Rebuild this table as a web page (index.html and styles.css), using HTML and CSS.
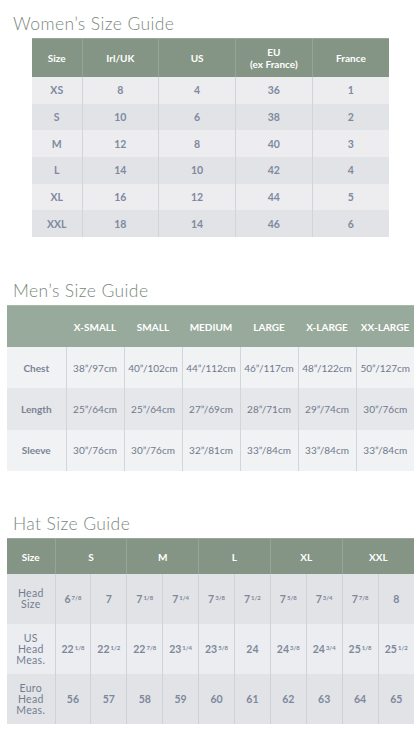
FILE: index.html
```html
<!DOCTYPE html>
<html lang="en">
<head>
<meta charset="utf-8">
<title>Size Guides</title>
<link rel="stylesheet" href="styles.css">
</head>
<body>
<main class="page">
  <section class="guide guide-women">
    <h2 class="guide-title">Women’s Size Guide</h2>
    <table class="chart women">
      <colgroup><col class="c-first"><col><col><col><col></colgroup>
      <thead>
        <tr><th>Size</th><th>Irl/UK</th><th>US</th><th>EU<br>(ex France)</th><th>France</th></tr>
      </thead>
      <tbody>
        <tr><td>XS</td><td>8</td><td>4</td><td>36</td><td>1</td></tr>
        <tr><td>S</td><td>10</td><td>6</td><td>38</td><td>2</td></tr>
        <tr><td>M</td><td>12</td><td>8</td><td>40</td><td>3</td></tr>
        <tr><td>L</td><td>14</td><td>10</td><td>42</td><td>4</td></tr>
        <tr><td>XL</td><td>16</td><td>12</td><td>44</td><td>5</td></tr>
        <tr><td>XXL</td><td>18</td><td>14</td><td>46</td><td>6</td></tr>
      </tbody>
    </table>
  </section>

  <section class="guide guide-men">
    <h2 class="guide-title">Men’s Size Guide</h2>
    <table class="chart men">
      <colgroup><col class="c-first"><col><col><col><col><col><col></colgroup>
      <thead>
        <tr><th></th><th>X-SMALL</th><th>SMALL</th><th>MEDIUM</th><th>LARGE</th><th>X-LARGE</th><th>XX-LARGE</th></tr>
      </thead>
      <tbody>
        <tr><th class="row-label">Chest</th><td>38”/97cm</td><td>40”/102cm</td><td>44”/112cm</td><td>46”/117cm</td><td>48”/122cm</td><td>50”/127cm</td></tr>
        <tr><th class="row-label">Length</th><td>25”/64cm</td><td>25”/64cm</td><td>27”/69cm</td><td>28”/71cm</td><td>29”/74cm</td><td>30”/76cm</td></tr>
        <tr><th class="row-label">Sleeve</th><td>30”/76cm</td><td>30”/76cm</td><td>32”/81cm</td><td>33”/84cm</td><td>33”/84cm</td><td>33”/84cm</td></tr>
      </tbody>
    </table>
  </section>

  <section class="guide guide-hat">
    <h2 class="guide-title">Hat Size Guide</h2>
    <table class="chart hat">
      <colgroup><col class="c-first"><col><col><col><col><col><col><col><col><col><col></colgroup>
      <thead>
        <tr><th>Size</th><th colspan="2">S</th><th colspan="2">M</th><th colspan="2">L</th><th colspan="2">XL</th><th colspan="2">XXL</th></tr>
      </thead>
      <tbody>
        <tr><th class="row-label">Head<br>Size</th><td>6<sup>7/8</sup></td><td>7</td><td>7<sup>1/8</sup></td><td>7<sup>1/4</sup></td><td>7<sup>3/8</sup></td><td>7<sup>1/2</sup></td><td>7<sup>5/8</sup></td><td>7<sup>3/4</sup></td><td>7<sup>7/8</sup></td><td>8</td></tr>
        <tr><th class="row-label">US<br>Head<br>Meas.</th><td>22<sup>1/8</sup></td><td>22<sup>1/2</sup></td><td>22<sup>7/8</sup></td><td>23<sup>1/4</sup></td><td>23<sup>5/8</sup></td><td>24</td><td>24<sup>3/8</sup></td><td>24<sup>3/4</sup></td><td>25<sup>1/8</sup></td><td>25<sup>1/2</sup></td></tr>
        <tr><th class="row-label">Euro<br>Head<br>Meas.</th><td>56</td><td>57</td><td>58</td><td>59</td><td>60</td><td>61</td><td>62</td><td>63</td><td>64</td><td>65</td></tr>
      </tbody>
    </table>
  </section>
</main>
</body>
</html>
```

FILE: styles.css
```css
html, body {
  margin: 0;
  padding: 0;
  background: #ffffff;
}

body {
  font-family: Lato, "Open Sans", "DejaVu Sans", sans-serif;
  color: #7a8396;
}

.page {
  width: 420px;
  display: flex;
  flex-direction: column;
}

.guide {
  display: flex;
  flex-direction: column;
}

.guide-title {
  margin: 0 0 4px;
  padding-left: 13px;
  font-family: Lato, "Open Sans", sans-serif;
  font-weight: 300;
  font-size: 17.5px;
  line-height: 20px;
  letter-spacing: 0.4px;
  color: #7b887e;
}

.guide-women { padding-top: 14px; }
.guide-men { padding-top: 44px; }
.guide-hat { padding-top: 43px; }

.chart {
  border-collapse: collapse;
  table-layout: fixed;
  text-align: center;
}

.chart th,
.chart td {
  padding: 0;
  vertical-align: middle;
  text-align: center;
}

.chart thead th {
  color: #ffffff;
  font-weight: 700;
  font-size: 10px;
  line-height: 12px;
}

.chart tbody td,
.chart tbody th {
  font-size: 10px;
  line-height: 12px;
}

/* Women's */
.women {
  width: 357px;
  margin: 0 31px 0 32px;
}
.women col.c-first { width: 50px; }
.women thead th {
  background: #849585;
  height: 38px;
  border-left: 1px solid #96a597;
  border-top: 1px solid #9aa89b;
}
.women thead th:first-child { border-left: none; }
.women tbody td {
  height: 26.7px;
  font-weight: 700;
  font-size: 10.5px;
  color: #8089a0;
  border-left: 1px solid #d1d4da;
}
.women tbody td:first-child { border-left: none; }
.women tbody tr:nth-child(odd) td { background: #ededf0; }
.women tbody tr:nth-child(even) td { background: #e2e3e7; }

/* Men's */
.men {
  width: 407px;
  margin: 0 6px 0 7px;
}
.men col.c-first { width: 59px; }
.men thead th {
  background: #98aa9b;
  height: 41px;
  border-top: 1px solid #a9b8ab;
}
.men tbody td,
.men tbody th {
  height: 41.3px;
  color: #6f798c;
  font-weight: 400;
  border-left: 1px solid #d2d5da;
}
.men tbody th.row-label {
  border-left: none;
  font-weight: 700;
  color: #7a8396;
}
.men tbody tr:nth-child(odd) td,
.men tbody tr:nth-child(odd) th { background: #f1f2f4; }
.men tbody tr:nth-child(even) td,
.men tbody tr:nth-child(even) th { background: #e5e7ea; }

/* Hat */
.hat {
  width: 407px;
  margin: 0 6px 0 7px;
}
.hat col.c-first { width: 48px; }
.hat thead th {
  background: #849585;
  height: 35px;
  border-left: 1px solid #96a597;
  border-top: 1px solid #9aa89b;
}
.hat thead th:first-child { border-left: none; }
.hat tbody td,
.hat tbody th {
  height: 50px;
  font-weight: 700;
  font-size: 10.5px;
  color: #7e889c;
  border-left: 1px solid #cfd2d8;
}
.hat tbody th.row-label {
  border-left: none;
  font-weight: 400;
  font-size: 10.5px;
  line-height: 11px;
  letter-spacing: 0.3px;
  color: #737d92;
}
.hat tbody tr:nth-child(odd) td,
.hat tbody tr:nth-child(odd) th { background: #e2e3e7; }
.hat tbody tr:nth-child(even) td,
.hat tbody tr:nth-child(even) th { background: #ecedf0; }

.hat sup {
  font-size: 6px;
  line-height: 0;
  vertical-align: 3px;
  margin-left: 1px;
}
```
